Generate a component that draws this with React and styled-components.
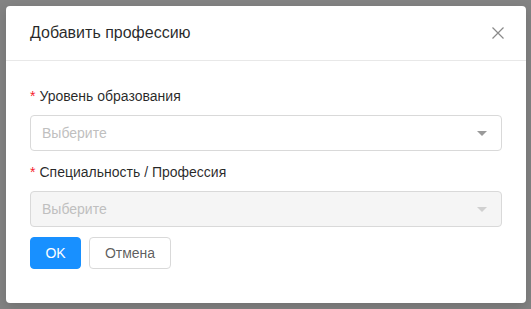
import React from "react"
import styled, { createGlobalStyle } from "styled-components"

const GlobalStyle = createGlobalStyle`
  html, body {
    margin: 0;
    padding: 0;
    background: #838383;
    font-family: "Liberation Sans", Arial, sans-serif;
  }
`

const Backdrop = styled.div`
  width: 531px;
  height: 309px;
  padding: 6px;
  box-sizing: border-box;
  background: #838383;
`

const Modal = styled.div`
  width: 520px;
  height: 297px;
  background: #fff;
  border-radius: 4px;
  box-shadow: 0 4px 12px rgba(0, 0, 0, 0.15);
  display: flex;
  flex-direction: column;
`

const Header = styled.div`
  display: flex;
  align-items: center;
  justify-content: space-between;
  padding: 16px 22px 16px 24px;
  border-bottom: 1px solid #e8e8e8;
`

const Title = styled.div`
  font-size: 16px;
  line-height: 22px;
  color: rgba(0, 0, 0, 0.85);
`

const Close = styled.button`
  border: 0;
  background: none;
  padding: 0;
  width: 12px;
  height: 12px;
  display: flex;
  cursor: pointer;
`

const Body = styled.div`
  padding: 24px 24px 0;
  display: flex;
  flex-direction: column;
`

const Field = styled.div`
  display: flex;
  flex-direction: column;
  gap: 8px;
  margin-bottom: 10px;
`

const Label = styled.div`
  font-size: 14px;
  line-height: 22px;
  color: rgba(0, 0, 0, 0.85);
  &::before {
    content: "*";
    color: #f5222d;
    margin-right: 4px;
    font-size: 14px;
  }
`

const Select = styled.div`
  height: 36px;
  box-sizing: border-box;
  border: 1px solid #d9d9d9;
  border-radius: 4px;
  background: ${p => (p.disabled ? "#f5f5f5" : "#fff")};
  display: flex;
  align-items: center;
  justify-content: space-between;
  padding: 0 11px;
`

const Placeholder = styled.span`
  font-size: 14px;
  color: #bfbfbf;
`

const Arrow = styled.span`
  width: 0;
  height: 0;
  border-left: 5px solid transparent;
  border-right: 5px solid transparent;
  border-top: 5px solid ${p => (p.disabled ? "#d0d0d0" : "#9a9a9a")};
  margin-right: 3px;
`

const Actions = styled.div`
  display: flex;
  gap: 8px;
`

const Button = styled.button`
  height: 32px;
  box-sizing: border-box;
  padding: 0;
  border-radius: 4px;
  font-family: "Liberation Sans", Arial, sans-serif;
  font-size: 14px;
  border: 1px solid ${p => (p.primary ? "#1890ff" : "#d9d9d9")};
  background: ${p => (p.primary ? "#1890ff" : "#fff")};
  color: ${p => (p.primary ? "#fff" : "rgba(0, 0, 0, 0.65)")};
  width: ${p => (p.primary ? "51px" : "82px")};
  cursor: pointer;
`

const App = () => (
  <Backdrop>
    <GlobalStyle />
    <Modal>
      <Header>
        <Title>Добавить профессию</Title>
        <Close aria-label="close">
          <svg width="12" height="12" viewBox="0 0 12 12">
            <path d="M0.5 0.5 L11.5 11.5 M11.5 0.5 L0.5 11.5" stroke="#8a8a8a" strokeWidth="1.2" fill="none" />
          </svg>
        </Close>
      </Header>
      <Body>
        <Field>
          <Label>Уровень образования</Label>
          <Select>
            <Placeholder>Выберите</Placeholder>
            <Arrow />
          </Select>
        </Field>
        <Field>
          <Label>Специальность / Профессия</Label>
          <Select disabled>
            <Placeholder>Выберите</Placeholder>
            <Arrow disabled />
          </Select>
        </Field>
        <Actions>
          <Button primary>OK</Button>
          <Button>Отмена</Button>
        </Actions>
      </Body>
    </Modal>
  </Backdrop>
)

export default App
